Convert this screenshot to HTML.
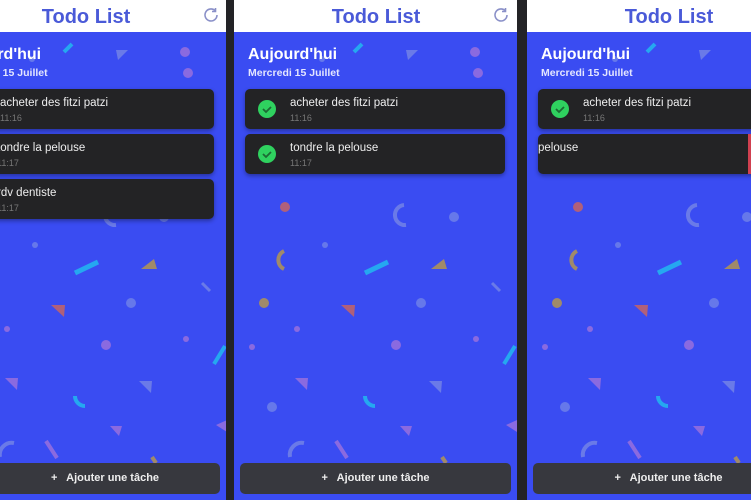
<!DOCTYPE html>
<html><head><meta charset="utf-8"><style>
*{margin:0;padding:0;box-sizing:border-box}
body{width:751px;height:500px;background:#232326;position:relative;overflow:hidden;font-family:"Liberation Sans",Arial,sans-serif}
.panel{position:absolute;top:0;height:500px;background:#3a4cf2;overflow:hidden}
.in{position:absolute;top:0;width:284px;height:500px}
.hdr{position:absolute;top:0;height:32px;background:#fff}
.title{position:absolute;top:6px;width:284px;text-align:center;color:#4a5ad8;font-weight:bold;font-size:20px}
.ref{position:absolute;top:7px;left:258px}
.h1{position:absolute;top:46px;left:14px;color:#fff;font-weight:bold;font-size:16px}
.h2{position:absolute;top:67px;left:14px;color:#e4e6ff;font-weight:bold;font-size:10.5px}
.card{position:absolute;height:40px;background:#232325;border-radius:5px;box-shadow:0 2px 4px rgba(0,0,0,.35)}
.t{position:absolute;top:8px;color:#eee;font-size:11.5px}
.tm{position:absolute;top:24px;color:#777;font-size:9px}
.chk{position:absolute;left:13px;top:11px;width:18px;height:18px;border-radius:50%;background:#2fd15f}
.btn{position:absolute;top:463px;height:31px;background:#37383e;border-radius:5px;color:#eee;font-size:11px;font-weight:bold;text-align:center;line-height:31px}
</style></head><body>
<svg width="0" height="0" style="position:absolute"><defs>
<g id="conf">
<circle cx="51" cy="207" r="5" fill="#b0607a"/>
<path d="M54 255a10 10 0 0 0 0 18" stroke="#a08a6a" stroke-width="4" fill="none" transform="translate(-4,-4)"/>
<path d="M170 205a10 10 0 0 0 2 20" stroke="#6a7ae8" stroke-width="4" fill="none"/>
<circle cx="220" cy="217" r="5" fill="#6678ea"/>
<circle cx="91" cy="245" r="3" fill="#6678ea"/>
<line x1="131" y1="273" x2="154" y2="262" stroke="#25a8f0" stroke-width="5"/>
<path d="M197 269l13-10l3 10z" fill="#a08a6a"/>
<path d="M258 283l8 8" stroke="#6a7ae8" stroke-width="3"/>
<circle cx="30" cy="303" r="5" fill="#a08a6a"/>
<path d="M107 305h14l-1 12z" fill="#b0607a"/>
<circle cx="187" cy="303" r="5" fill="#6678ea"/>
<circle cx="63" cy="329" r="3" fill="#8a6ae0"/>
<circle cx="18" cy="347" r="3" fill="#8a6ae0"/>
<circle cx="162" cy="345" r="5" fill="#8a6ae0"/>
<circle cx="242" cy="339" r="3" fill="#8a6ae0"/>
<line x1="281" y1="346" x2="270" y2="364" stroke="#25a8f0" stroke-width="4"/>
<path d="M61 378h13l-1 12z" fill="#8a6ae0"/>
<path d="M195 381h13l-1 12z" fill="#6a7ae8"/>
<path d="M131 396a10 10 0 0 0 10 10" stroke="#25a8f0" stroke-width="4" fill="none"/>
<circle cx="38" cy="407" r="5" fill="#6678ea"/>
<path d="M166 426h12l-3 10z" fill="#8a6ae0"/>
<path d="M272 425l11-5v12z" fill="#8a6ae0"/>
<path d="M70 443a12 12 0 0 0-14 14" stroke="#6a7ae8" stroke-width="4" fill="none"/>
<line x1="102" y1="441" x2="113" y2="458" stroke="#8a6ae0" stroke-width="4"/>
<line x1="208" y1="457" x2="212" y2="463" stroke="#a08a6a" stroke-width="4"/>
<line x1="120" y1="52" x2="128" y2="44" stroke="#25a8f0" stroke-width="4"/>
<path d="M172 50h12l-10 10z" fill="#6a7ae8"/>
<circle cx="241" cy="52" r="5" fill="#8a6ae0"/>
<circle cx="244" cy="73" r="5" fill="#8a6ae0"/>
<circle cx="88" cy="59" r="3" fill="#6678ea"/>
</g>
<g id="refi"><path d="M15 8a6 6 0 1 1-2-4.5" stroke="#8a90c8" stroke-width="1.6" fill="none"/><path d="M13.5 1v3.5h-3.5" stroke="#8a90c8" stroke-width="1.6" fill="none"/></g>
<g id="ck"><path d="M5 9l3 3l5-5" stroke="#1c6a34" stroke-width="1.8" fill="none"/></g>
</defs></svg>

<!-- panel 1 -->
<div class="panel" style="left:0;width:226px">
<div class="in" style="left:-56px">
<svg width="284" height="500" style="position:absolute;left:0;top:0"><use href="#conf"/></svg>
<div class="hdr" style="left:0;width:284px"></div>
<div class="title">Todo List</div>
<svg class="ref" width="18" height="18"><use href="#refi"/></svg>
</div>
<div class="h1" style="left:-48px">Aujourd'hui</div>
<div class="h2" style="left:-44px">Mercredi 15 Juillet</div>
<div class="card" style="left:-20px;top:89px;width:234px"><div class="t" style="left:20px">acheter des fitzi patzi</div><div class="tm" style="left:20px">11:16</div></div>
<div class="card" style="left:-20px;top:134px;width:234px"><div class="t" style="left:17px">tondre la pelouse</div><div class="tm" style="left:17px">11:17</div></div>
<div class="card" style="left:-20px;top:179px;width:234px"><div class="t" style="left:17px">rdv dentiste</div><div class="tm" style="left:17px">11:17</div></div>
<div class="btn" style="left:-10px;width:230px">+&nbsp;&nbsp; Ajouter une tâche</div>
</div>

<!-- panel 2 -->
<div class="panel" style="left:234px;width:283px">
<div class="in" style="left:0">
<svg width="284" height="500" style="position:absolute;left:0;top:0"><use href="#conf"/></svg>
<div class="hdr" style="left:0;width:284px"></div>
<div class="title">Todo List</div>
<svg class="ref" width="18" height="18"><use href="#refi"/></svg>
<div class="h1">Aujourd'hui</div>
<div class="h2">Mercredi 15 Juillet</div>
<div class="card" style="left:11px;top:89px;width:260px"><div class="chk"><svg width="18" height="18"><use href="#ck"/></svg></div><div class="t" style="left:45px">acheter des fitzi patzi</div><div class="tm" style="left:45px">11:16</div></div>
<div class="card" style="left:11px;top:134px;width:260px"><div class="chk"><svg width="18" height="18"><use href="#ck"/></svg></div><div class="t" style="left:45px">tondre la pelouse</div><div class="tm" style="left:45px">11:17</div></div>
<div class="btn" style="left:6px;width:271px">+&nbsp;&nbsp; Ajouter une tâche</div>
</div>
</div>

<!-- panel 3 -->
<div class="panel" style="left:527px;width:224px">
<div class="in" style="left:0">
<svg width="284" height="500" style="position:absolute;left:0;top:0"><use href="#conf"/></svg>
<div class="hdr" style="left:0;width:284px"></div>
<div class="title">Todo List</div>
<div class="h1">Aujourd'hui</div>
<div class="h2">Mercredi 15 Juillet</div>
<div class="card" style="left:11px;top:89px;width:260px"><div class="chk"><svg width="18" height="18"><use href="#ck"/></svg></div><div class="t" style="left:45px">acheter des fitzi patzi</div><div class="tm" style="left:45px">11:16</div></div>
<div class="card" style="left:11px;top:134px;width:260px;border-radius:5px 0 0 5px"><div class="t" style="left:0">pelouse</div></div>
<div style="position:absolute;left:221px;top:134px;width:4px;height:40px;background:#d04050"></div>
<div class="btn" style="left:6px;width:271px">+&nbsp;&nbsp; Ajouter une tâche</div>
</div>
</div>
</body></html>
